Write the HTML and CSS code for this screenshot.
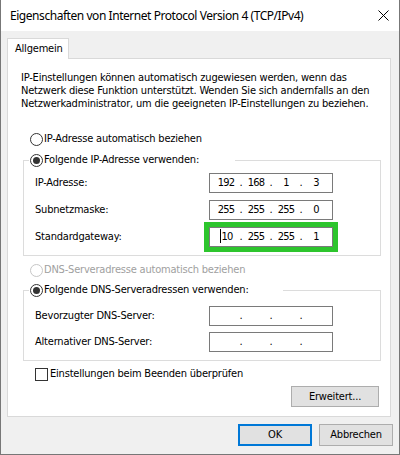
FILE: index.html
```html
<!DOCTYPE html>
<html lang="de">
<head>
<meta charset="utf-8">
<title>Eigenschaften von Internet Protocol Version 4 (TCP/IPv4)</title>
<link rel="stylesheet" href="styles.css">
</head>
<body>
<div class="window">
  <div class="titlebar">
    <span class="title">Eigenschaften von Internet Protocol Version 4 (TCP/IPv4)</span>
    <svg class="close" width="11" height="11" viewBox="0 0 11 11"><path d="M0.5 0.5L10.5 10.5M10.5 0.5L0.5 10.5" stroke="#000" stroke-width="1" fill="none"/></svg>
  </div>
  <div class="client">
    <div class="tabs"><div class="tab">Allgemein</div></div>
    <div class="panel">
      <p class="intro">IP-Einstellungen können automatisch zugewiesen werden, wenn das<br>Netzwerk diese Funktion unterstützt. Wenden Sie sich andernfalls an den<br>Netzwerkadministrator, um die geeigneten IP-Einstellungen zu beziehen.</p>

      <div class="option opt-ip-auto"><span class="radio"></span><span>IP-Adresse automatisch beziehen</span></div>

      <fieldset class="group group-ip">
        <legend class="legend-ip"><span class="radio checked"></span><span>Folgende IP-Adresse verwenden:</span></legend>
        <div class="fields fields-ip">
          <span class="label">IP-Adresse:</span>
          <div class="ipbox"><span class="oct">192</span><span class="dot">.</span><span class="oct">168</span><span class="dot">.</span><span class="oct">1</span><span class="dot">.</span><span class="oct">3</span></div>
          <span class="label">Subnetzmaske:</span>
          <div class="ipbox"><span class="oct">255</span><span class="dot">.</span><span class="oct">255</span><span class="dot">.</span><span class="oct">255</span><span class="dot">.</span><span class="oct">0</span></div>
          <span class="label">Standardgateway:</span>
          <div class="ipbox focused"><span class="oct"><span class="caret"></span>10</span><span class="dot">.</span><span class="oct">255</span><span class="dot">.</span><span class="oct">255</span><span class="dot">.</span><span class="oct">1</span></div>
        </div>
      </fieldset>

      <div class="option opt-dns-auto disabled"><span class="radio"></span><span>DNS-Serveradresse automatisch beziehen</span></div>

      <fieldset class="group group-dns">
        <legend class="legend-dns"><span class="radio checked"></span><span>Folgende DNS-Serveradressen verwenden:</span></legend>
        <div class="fields fields-dns">
          <span class="label">Bevorzugter DNS-Server:</span>
          <div class="ipbox"><span class="oct"></span><span class="dot">.</span><span class="oct"></span><span class="dot">.</span><span class="oct"></span><span class="dot">.</span><span class="oct"></span></div>
          <span class="label">Alternativer DNS-Server:</span>
          <div class="ipbox"><span class="oct"></span><span class="dot">.</span><span class="oct"></span><span class="dot">.</span><span class="oct"></span><span class="dot">.</span><span class="oct"></span></div>
        </div>
      </fieldset>

      <div class="option opt-check"><span class="checkbox"></span><span>Einstellungen beim Beenden überprüfen</span></div>

      <div class="panel-actions"><button class="btn btn-advanced">Erweitert...</button></div>
    </div>
    <div class="dialog-buttons">
      <button class="btn btn-default">OK</button>
      <button class="btn">Abbrechen</button>
    </div>
  </div>
</div>
</body>
</html>
```
FILE: styles.css
```css
* { box-sizing: border-box; }

html, body { margin: 0; padding: 0; background: #fff; }

/* Dialog body text: narrow sans at 11px */
body {
  font: 11px/16px "DejaVu Sans Condensed", "DejaVu Sans", sans-serif;
  letter-spacing: -0.2px;
  color: #000;
}

/* Window frame */
.window {
  width: 400px;
  height: 455px;
  display: flex;
  flex-direction: column;
  border: 1px solid #777;
  border-top: 0;
  background: #f0f0f0;
}

.titlebar {
  height: 31px;
  flex: none;
  display: flex;
  align-items: center;
  padding-left: 9px;
  background: #fff;
}

.title {
  font: 12px/16px "Noto Sans", sans-serif;
  letter-spacing: -0.45px;
  white-space: nowrap;
}

.close {
  margin-left: auto;
  margin-right: 10px;
  display: block;
}

.client {
  flex: 1;
  padding: 7px 8px 0 6px;
}

/* Tab strip */
.tabs {
  display: flex;
  position: relative;
  z-index: 1;
  margin-bottom: -1px;
}

.tab {
  width: 62px;
  height: 21px;
  padding-left: 7px;
  line-height: 20px;
  background: #fff;
  border: 1px solid #d9d9d9;
  border-bottom: 0;
}

.panel {
  background: #fff;
  border: 1px solid #d9d9d9;
  padding: 12px 9px 9px 13px;
}

.intro {
  margin: 0;
  line-height: 13px;
  white-space: nowrap;
}

/* Radio buttons and check box */
.option {
  display: flex;
  align-items: center;
  height: 16px;
  white-space: nowrap;
}

.opt-ip-auto { margin-top: 21px; padding-left: 9px; }
.opt-dns-auto { margin-top: 6px; padding-left: 9px; }
.opt-check { margin-top: 5px; padding-left: 14px; }

.radio {
  width: 13px;
  height: 13px;
  flex: none;
  margin-right: 1px;
  border: 1px solid #333;
  border-radius: 50%;
  background: #fff;
  display: flex;
  align-items: center;
  justify-content: center;
}

.radio.checked::after {
  content: "";
  width: 7px;
  height: 7px;
  border-radius: 50%;
  background: #333;
}

.disabled { color: #a0a0a0; }
.disabled .radio { border-color: #c6c6c6; }

.checkbox {
  width: 13px;
  height: 13px;
  flex: none;
  margin-right: 2px;
  border: 1px solid #333;
  background: #fff;
}

/* Group boxes */
.group {
  margin: 5px 0 0 2px;
  padding: 0;
  min-width: 0;
  border: 1px solid #dcdcdc;
}

.group-dns { margin-top: 4px; }

.group legend {
  display: flex;
  align-items: center;
  height: 16px;
  margin-left: 5px;
  padding: 0 0 0 1px;
  white-space: nowrap;
}

.legend-ip { width: 206px; }
.legend-dns { width: 254px; }

.fields {
  display: grid;
  grid-template-columns: 174px 124px;
  align-items: center;
  padding: 5px 0 8px 11px;
}

.fields-ip { row-gap: 7px; }
.fields-dns { row-gap: 6px; padding-top: 8px; }

.label { white-space: nowrap; }

/* IP address control */
.ipbox {
  height: 20px;
  display: flex;
  align-items: center;
  padding-left: 3px;
  border: 1px solid #7a7a7a;
  background: #fff;
}

.oct {
  width: 26px;
  text-align: center;
  letter-spacing: -0.8px;
  white-space: nowrap;
}

.dot {
  width: 4px;
  text-align: center;
  letter-spacing: 0;
}

.focused {
  outline: 5px solid #2dc52d;
}

.caret {
  display: inline-block;
  width: 1px;
  height: 14px;
  margin-right: 1px;
  vertical-align: -3px;
  background: #000;
}

/* Buttons */
.btn {
  font: inherit;
  letter-spacing: inherit;
  color: #000;
  background: #e1e1e1;
  border: 1px solid #adadad;
  padding: 0;
  margin: 0;
}

.panel-actions {
  display: flex;
  justify-content: flex-end;
  margin-top: 4px;
  margin-right: 2px;
}

.btn-advanced { width: 88px; height: 21px; }

.dialog-buttons {
  display: flex;
  justify-content: flex-end;
  gap: 7px;
  margin-top: 7px;
  margin-right: -2px;
}

.dialog-buttons .btn { width: 74px; height: 22px; }

.btn-default { border: 2px solid #0078d7; }
```
